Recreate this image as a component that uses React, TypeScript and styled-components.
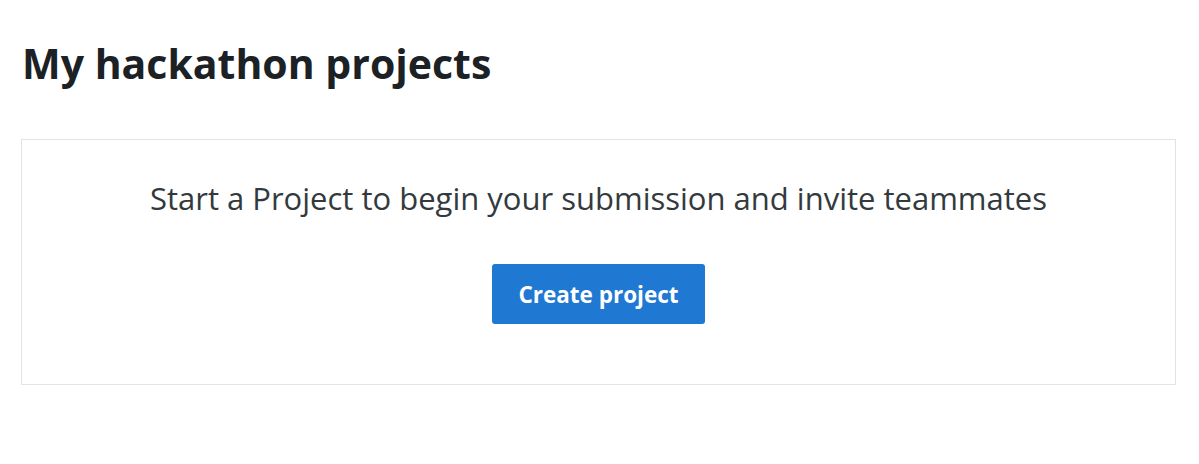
import React from "react";
import styled, { createGlobalStyle } from "styled-components";

const GlobalStyle = createGlobalStyle`
  html, body { margin: 0; padding: 0; background: #ffffff; }
  body { font-family: "Open Sans", "Noto Sans", Arial, sans-serif; color: #1b2124; }
`;

const Page = styled.main`
  padding: 32px 23px 0 21px;
  display: flex;
  flex-direction: column;
`;

const Title = styled.h1`
  margin: 0;
  font-family: "Open Sans", "Noto Sans", sans-serif;
  font-weight: 700;
  font-size: 41px;
  line-height: 62px;
  color: #1b2124;
  padding-left: 1px;
`;

const Card = styled.section`
  margin-top: 45px;
  border: 1px solid #dde5e7;
  display: flex;
  flex-direction: column;
  align-items: center;
  padding-top: 38px;
  box-sizing: border-box;
  height: 246px;
`;

const Message = styled.p`
  margin: 0;
  font-family: "Open Sans", "Noto Sans", sans-serif;
  font-weight: 400;
  font-size: 31px;
  line-height: 40px;
  color: #333a3e;
`;

const PrimaryButton = styled.button`
  margin-top: 46px;
  width: 213px;
  height: 60px;
  border: none;
  border-radius: 3px;
  background: #1f78d1;
  color: #ffffff;
  font-family: "Open Sans", "Noto Sans", sans-serif;
  font-weight: 700;
  font-size: 22.5px;
  cursor: pointer;
`;

export default function App() {
  return (
    <>
      <GlobalStyle />
      <Page>
        <Title>My hackathon projects</Title>
        <Card>
          <Message>Start a Project to begin your submission and invite teammates</Message>
          <PrimaryButton>Create project</PrimaryButton>
        </Card>
      </Page>
    </>
  );
}
